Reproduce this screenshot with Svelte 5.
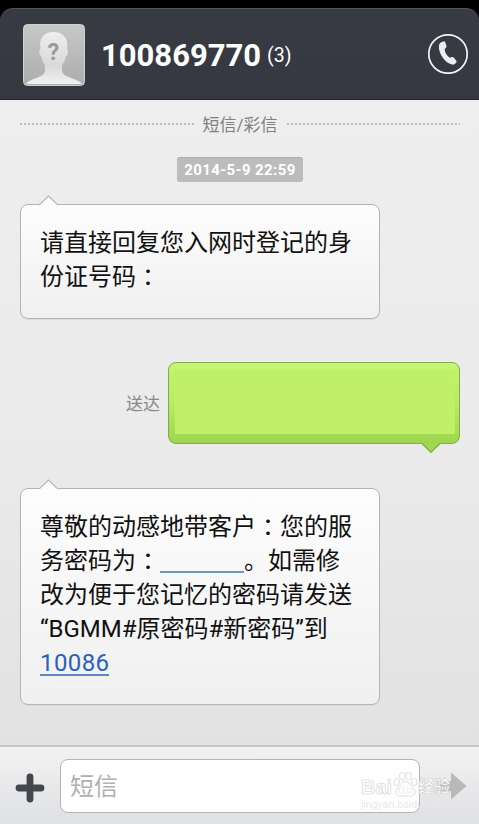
<script lang="ts">
  interface Message {
    lines: string[];
    link?: string;
  }

  const contact = { number: '100869770', count: 3 };
  const sentAt = '2014-5-9 22:59';

  const question: Message = {
    lines: ['请直接回复您入网时登记的身', '份证号码：'],
  };

  const answer: Message = {
    lines: ['尊敬的动感地带客户：您的服', '务密码为：_。如需修', '改为便于您记忆的密码请发送', '“BGMM#原密码#新密码”到'],
    link: '10086',
  };

  let draft = $state('');
</script>

{#snippet received(message: Message)}
  <div class="bubble bubble--in">
    <svg class="tail tail--in" width="20" height="11" viewBox="0 0 20 11">
      <path d="M0 11V9.9L9.5 1 19 9.9V11z" fill="#fcfcfc" />
      <path d="M0 10.1L9.5 1 19 10.1" fill="none" stroke="#b5b5b5" stroke-width="1.2" />
    </svg>
    {#each message.lines as line}
      <div class="line">
        {#each line as char}{#if char === '_'}<a class="blank" href="#code" aria-label="code"></a>{:else if char === '：'}<span class="colon">{char}</span>{:else}{char}{/if}{/each}
      </div>
    {/each}
    {#if message.link}
      <div class="line"><a class="link" href="#dial">{message.link}</a></div>
    {/if}
  </div>
{/snippet}

<div class="screen">
  <header class="header">
    <svg class="avatar" width="62" height="62" viewBox="0 0 62 62">
      <defs>
        <linearGradient id="avatar-bg" x1="0" y1="0" x2="0" y2="1">
          <stop offset="0" stop-color="#c7c7c7" />
          <stop offset="1" stop-color="#adadad" />
        </linearGradient>
        <linearGradient id="person" x1="0" y1="0" x2="0" y2="1">
          <stop offset="0" stop-color="#eeeeee" />
          <stop offset="0.65" stop-color="#d9d9d9" />
          <stop offset="1" stop-color="#f1f1f1" />
        </linearGradient>
      </defs>
      <rect x="0.5" y="0.5" width="61" height="61" rx="4" fill="url(#avatar-bg)" stroke="#d0d0d0" />
      <path
        d="M3 60C7 54 21 54 22 47V41C20 39 19 36 18.500 33C15.500 31 16 26 17.500 25C15.500 14 21 8 30.500 8S46 14 44 25C46 27 45 32 42.500 33C42 36 41 39 39 41V47C40 54 55 54 59 60z"
        fill="url(#person)"
      />
      <text x="30.500" y="35.500" class="avatar__mark">?</text>
    </svg>
    <h1 class="header__number">{contact.number}</h1>
    <span class="header__count">({contact.count})</span>
    <button type="button" class="call" aria-label="Call">
      <svg width="42" height="42" viewBox="0 0 42 42">
        <circle cx="21" cy="21" r="19.200" fill="none" stroke="#f2f2f4" stroke-width="1.700" />
        <path
          d="M14.200 9.200L17 8.200Q17.800 8.200 18.400 9.400L19.600 13.200Q19.700 14.200 17.700 16.200Q18 21.300 22.800 24.700L25.200 24Q26.100 23.700 27 24.800L29.600 28.200Q29.800 29 28.900 30Q27.200 32 25.200 31.600Q18.900 30.300 14.300 22.600Q10.700 15 12.300 11.300Q12.900 9.900 14.200 9.200z"
          fill="#ececef"
        />
      </svg>
    </button>
  </header>

  <main class="thread">
    <div class="divider">
      <span class="dots"></span>
      <span>短信/彩信</span>
      <span class="dots"></span>
    </div>

    <time class="stamp">{sentAt}</time>

    {@render received(question)}

    <div class="sent">
      <span class="sent__status">送达</span>
      <div class="bubble--out">
        <div class="bubble__fill"></div>
        <svg class="tail tail--out" width="20" height="11" viewBox="0 0 20 11">
          <path d="M0 0H20L10 9.500z" fill="#a0d852" />
          <path d="M1 0.500L10 9.300 19 0.500" fill="none" stroke="#83ab4e" stroke-width="1.200" />
        </svg>
      </div>
    </div>

    {@render received(answer)}
  </main>

  <footer class="composer">
    <button type="button" class="add" aria-label="Add">
      <svg width="30" height="30" viewBox="0 0 30 30">
        <path d="M15 4V26M4 15H26" stroke="#44464e" stroke-width="6.800" stroke-linecap="round" />
      </svg>
    </button>
    <input class="field" placeholder="短信" bind:value={draft} />
    <button type="button" class="send" aria-label="Send">
      <svg width="30" height="30" viewBox="0 0 30 30">
        <path d="M0 10H14V1.500L29.500 15 14 28.500V20H0z" fill="#b8b9bb" />
      </svg>
    </button>
    <div class="watermark">
      <div class="watermark__name">
        <span class="watermark__bai">Bai</span>
        <svg width="25" height="28" viewBox="0 0 27 28">
          <g fill="#fff" stroke="#dadada">
            <ellipse cx="4" cy="12" rx="3" ry="4" />
            <ellipse cx="10" cy="5.500" rx="3" ry="4.200" />
            <ellipse cx="17" cy="5.500" rx="3" ry="4.200" />
            <ellipse cx="23" cy="12" rx="3" ry="4" />
            <path d="M13.500 11C9 11 8 17 4.500 19C1 23 4 28 9 27H18C23 28 26 23 22.500 19C19 17 18 11 13.500 11z" />
          </g>
          <text x="13.500" y="25" class="watermark__du">du</text>
        </svg>
        <span class="watermark__cn">经验</span>
      </div>
      <div class="watermark__url">jingyan.baidu.com</div>
    </div>
  </footer>
</div>

<style>
  :global(body) {
    margin: 0;
    background: #000;
  }

  .screen {
    box-sizing: border-box;
    width: 479px;
    height: 824px;
    padding-top: 8px;
    display: flex;
    flex-direction: column;
    overflow: hidden;
    background: #000;
    font-family: Roboto, 'Noto Sans CJK SC', sans-serif;
  }

  button {
    padding: 0;
    border: 0;
    background: none;
    line-height: 0;
  }

  .header {
    box-sizing: border-box;
    flex: none;
    height: 92px;
    padding: 0 10px 0 23px;
    display: flex;
    align-items: center;
    border-top: 1px solid #50545b;
    border-bottom: 1px solid #24272d;
    border-radius: 13px 13px 0 0;
    background: linear-gradient(#383b43, #353840);
    color: #fff;
  }

  .avatar {
    margin-top: 1px;
  }

  .avatar__mark {
    font-size: 23px;
    font-weight: 700;
    text-anchor: middle;
    fill: #999;
  }

  .header__number {
    margin: 3px 0 0 16px;
    font-size: 31px;
    font-weight: 700;
    line-height: 36px;
  }

  .header__count {
    margin: 2px 0 0 6px;
    font-size: 19.5px;
  }

  .call {
    margin-left: auto;
  }

  .thread {
    box-sizing: border-box;
    flex: none;
    height: 645px;
    padding: 14px 19px 0 20px;
    display: flex;
    flex-direction: column;
    align-items: flex-start;
    background: linear-gradient(#eee, #ebebeb 50%, #e2e2e2);
  }

  .divider {
    width: 440px;
    height: 22px;
    display: flex;
    align-items: center;
    gap: 9px;
    color: #808080;
    font-size: 17px;
    line-height: 22px;
  }

  .dots {
    flex: 1;
    height: 2px;
    margin-bottom: 2px;
    background: repeating-linear-gradient(90deg, #bfbfbf 0 2px, transparent 2px 4px);
  }

  .stamp {
    box-sizing: border-box;
    align-self: center;
    width: 126px;
    height: 25px;
    margin: 21px 0 0 0;
    border-top: 1px solid #acacac;
    border-radius: 3px;
    background: #bcbcbc;
    color: #fff;
    font-size: 15px;
    font-weight: 700;
    line-height: 25px;
    text-align: center;
    letter-spacing: 0.4px;
  }

  .bubble--in {
    box-sizing: border-box;
    position: relative;
    width: 360px;
    height: 115px;
    margin-top: 22px;
    padding: 21px 0 0 19px;
    border: 1px solid #b5b5b5;
    border-radius: 8px;
    background: linear-gradient(#fdfdfd, #f0f0f0);
    box-shadow: 0 1px 1px #dadada;
    color: #111;
    font-size: 24px;
  }

  .tail {
    position: absolute;
  }

  .tail--in {
    top: -10px;
    left: 18px;
  }

  .line {
    height: 34px;
    line-height: 34px;
    white-space: nowrap;
  }

  .colon {
    position: relative;
    top: 1px;
    font-family: 'Noto Sans CJK TC', sans-serif;
    line-height: 0;
  }

  .blank {
    display: inline-block;
    width: 84px;
    height: 24px;
    border-bottom: 2px solid #6f96c1;
    vertical-align: -4px;
    box-sizing: border-box;
  }

  .link {
    display: inline-block;
    height: 30px;
    box-sizing: border-box;
    border-bottom: 2px solid #5c8ac4;
    color: #2c60b8;
    letter-spacing: 0.4px;
    text-decoration: none;
  }

  .sent {
    width: 440px;
    margin-top: 43px;
    display: flex;
    align-items: center;
    justify-content: flex-end;
    gap: 8px;
  }

  .sent__status {
    margin-top: 2px;
    color: #898989;
    font-size: 17px;
    line-height: 22px;
  }

  .bubble--out {
    box-sizing: border-box;
    position: relative;
    width: 292px;
    height: 82px;
    padding: 7px 4px 9px 6px;
    border: 1px solid #83ab4e;
    border-radius: 8px;
    background: linear-gradient(#c4f672, #b8eb60 50%, #9dd64e);
  }

  .bubble__fill {
    height: 64px;
    background: #bff067;
  }

  .tail--out {
    right: 18px;
    bottom: -11px;
  }

  .sent + .bubble--in {
    height: 217px;
    margin-top: 44px;
  }

  .composer {
    box-sizing: border-box;
    position: relative;
    flex: none;
    height: 79px;
    padding: 0 12px 0 15px;
    display: flex;
    align-items: center;
    border-top: 2px solid #c8c8c8;
    background: linear-gradient(#f2f2f2, #dfe0e3);
  }

  .add {
    margin-top: 5px;
  }

  .field {
    box-sizing: border-box;
    width: 360px;
    height: 54px;
    margin: 1px 0 0 15px;
    padding: 1px 9px 0;
    border: 1px solid #b5b5b5;
    border-radius: 8px;
    outline: none;
    background: #fff;
    font: 24px Roboto, 'Noto Sans CJK SC', sans-serif;
  }

  .field::placeholder {
    color: #b0b0b0;
    opacity: 1;
  }

  .send {
    margin: 1px 0 0 auto;
  }

  .watermark {
    position: absolute;
    top: 23px;
    left: 361px;
    width: 92px;
    color: #fff;
    font-family: 'Liberation Sans', 'Noto Sans CJK SC', sans-serif;
  }

  .watermark__name {
    height: 28px;
    display: flex;
    align-items: flex-end;
    font-size: 20px;
    font-weight: 700;
    line-height: 22px;
    -webkit-text-stroke: 0.6px #d0d0d0;
  }

  .watermark__bai {
    width: 32px;
  }

  .watermark__cn {
    font-size: 16px;
  }

  .watermark__du {
    fill: #f4f4f4;
    font-size: 14px;
    text-anchor: middle;
    -webkit-text-stroke: 0.8px #cacaca;
  }

  .watermark__url {
    color: #e9e9e9;
    font-size: 10.5px;
    line-height: 12px;
  }
</style>
